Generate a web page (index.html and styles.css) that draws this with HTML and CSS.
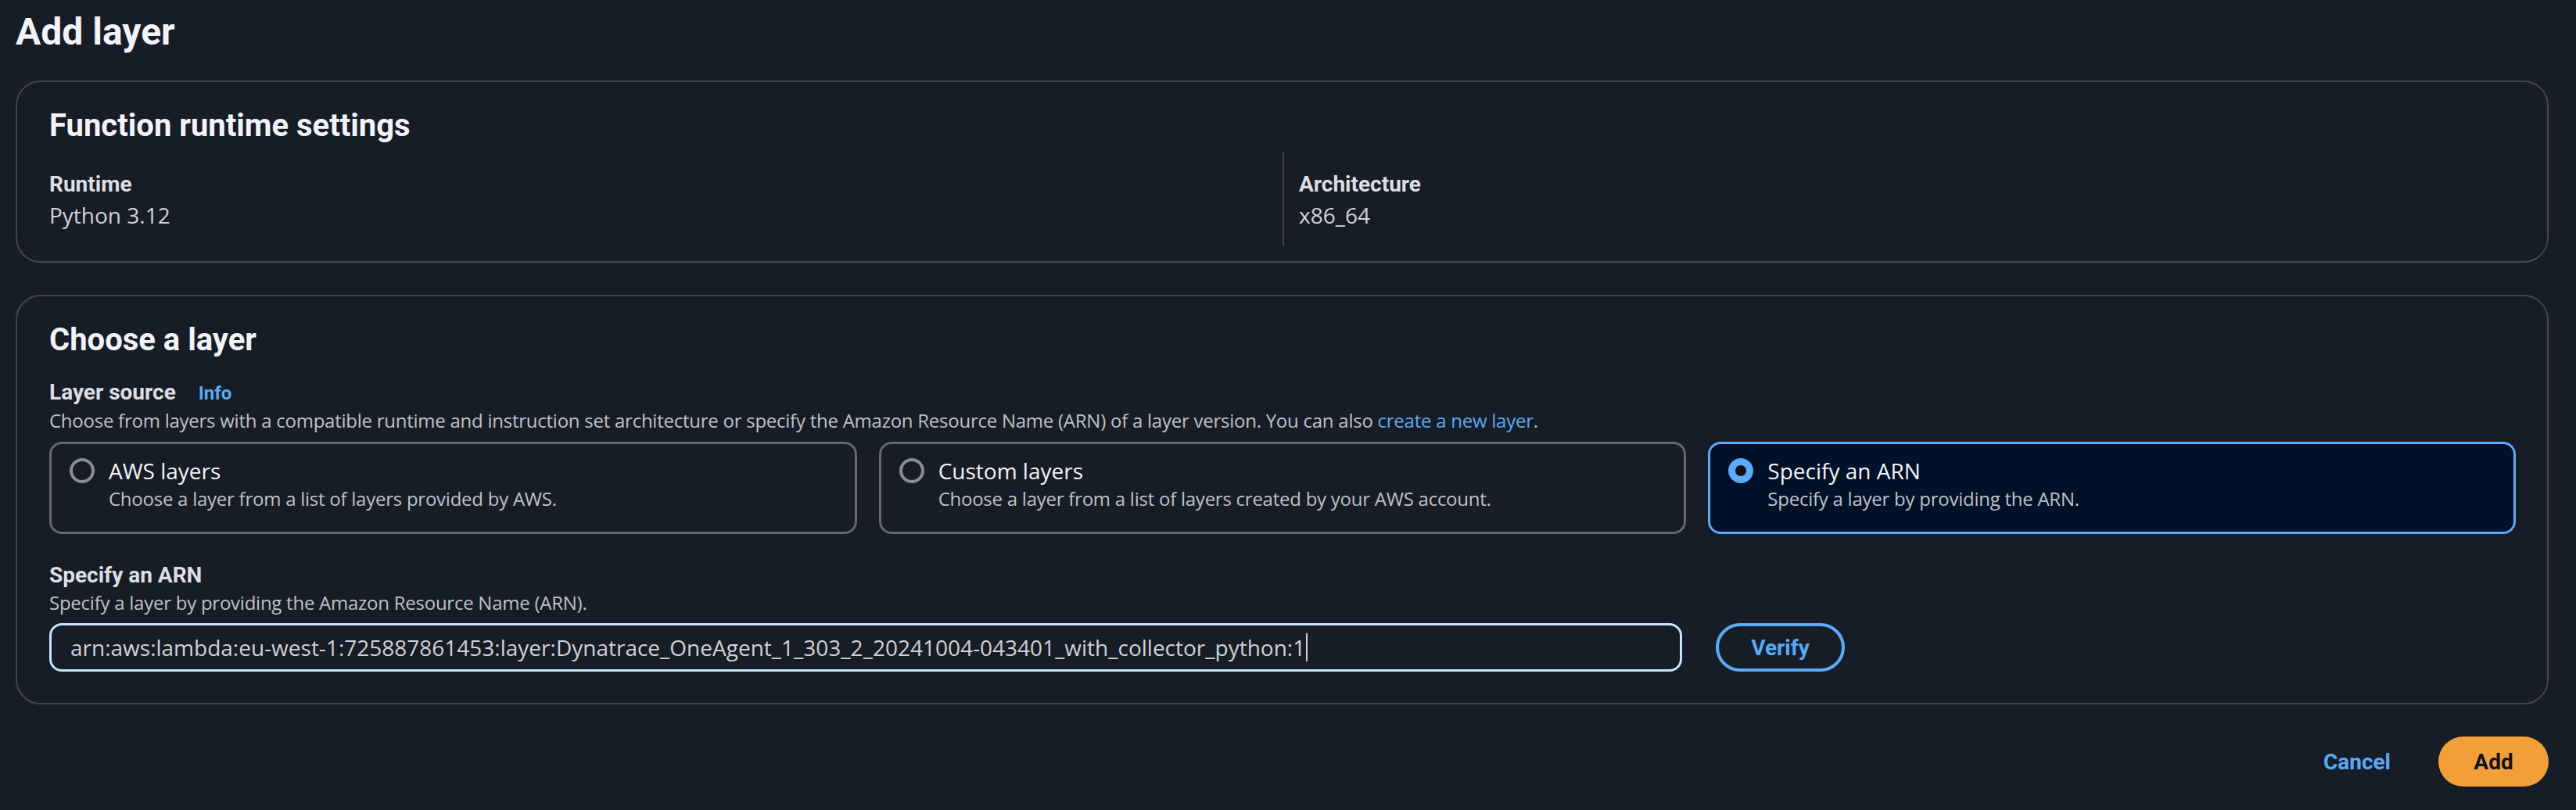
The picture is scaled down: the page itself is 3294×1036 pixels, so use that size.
FILE: index.html
```html
<!DOCTYPE html>
<html lang="en">
<head>
<meta charset="utf-8">
<title>Add layer</title>
<link rel="stylesheet" href="styles.css">
</head>
<body>
<div class="page">
  <h1 class="page-title">Add layer</h1>

  <section class="card">
    <h2 class="card-title">Function runtime settings</h2>
    <div class="kv-grid">
      <div class="kv-col">
        <div class="label">Runtime</div>
        <div class="value">Python 3.12</div>
      </div>
      <div class="kv-col kv-divided">
        <div class="label">Architecture</div>
        <div class="value">x86_64</div>
      </div>
    </div>
  </section>

  <section class="card card-layer">
    <h2 class="card-title">Choose a layer</h2>
    <div class="field">
      <div class="label">Layer source <a class="info-link">Info</a></div>
      <div class="desc">Choose from layers with a compatible runtime and instruction set architecture or specify the Amazon Resource Name (ARN) of a layer version. You can also <a class="link">create a new layer</a>.</div>
      <div class="tiles">
        <div class="tile">
          <span class="radio"></span>
          <div class="tile-text">
            <div class="tile-title">AWS layers</div>
            <div class="tile-desc">Choose a layer from a list of layers provided by AWS.</div>
          </div>
        </div>
        <div class="tile">
          <span class="radio"></span>
          <div class="tile-text">
            <div class="tile-title">Custom layers</div>
            <div class="tile-desc">Choose a layer from a list of layers created by your AWS account.</div>
          </div>
        </div>
        <div class="tile tile-selected">
          <span class="radio radio-checked"></span>
          <div class="tile-text">
            <div class="tile-title">Specify an ARN</div>
            <div class="tile-desc">Specify a layer by providing the ARN.</div>
          </div>
        </div>
      </div>
    </div>

    <div class="field field-arn">
      <div class="label">Specify an ARN</div>
      <div class="desc">Specify a layer by providing the Amazon Resource Name (ARN).</div>
      <div class="arn-row">
        <div class="input"><span class="input-text">arn:aws:lambda:eu-west-1:725887861453:layer:Dynatrace_OneAgent_1_303_2_20241004-043401_with_collector_python:1</span><span class="caret"></span></div>
        <button class="btn btn-normal">Verify</button>
      </div>
    </div>
  </section>

  <div class="actions">
    <button class="btn btn-link">Cancel</button>
    <button class="btn btn-primary">Add</button>
  </div>
</div>
</body>
</html>
```

FILE: styles.css
```css
* { box-sizing: border-box; }
html, body { margin: 0; padding: 0; }
body {
  background: #161d26;
  color: #dedee3;
  font-family: "Open Sans", "Noto Sans", sans-serif;
  width: 3294px;
  height: 1036px;
  overflow: hidden;
}
.page {
  padding: 9px 35px 0 20px;
}
.page-title {
  margin: 0;
  font-family: Roboto, "Open Sans", sans-serif;
  font-size: 48px;
  line-height: 64px;
  font-weight: 700;
  color: #f3f3f7;
}
.card {
  margin-top: 30px;
  border: 2px solid #424650;
  border-radius: 32px;
  padding: 28px 40px 19px 41px;
}
.card-layer { margin-top: 41px; padding-bottom: 40px; }
.card-title {
  margin: 0;
  font-family: Roboto, "Open Sans", sans-serif;
  font-size: 40px;
  line-height: 56px;
  font-weight: 700;
  color: #f3f3f7;
}
.kv-grid {
  margin-top: 6px;
  display: grid;
  grid-template-columns: 1fr 1fr;
}
.kv-col { padding: 20px 0; }
.kv-divided {
  border-left: 2px solid #424650;
  padding-left: 19px;
}
.label {
  font-family: Roboto, "Open Sans", sans-serif;
  font-size: 28px;
  line-height: 42px;
  margin-bottom: -2px;
  font-weight: 700;
  color: #dedee3;
}
.value {
  font-size: 28px;
  line-height: 40px;
  color: #d1d1d6;
}
.field { margin-top: 18px; }
.field-arn { margin-top: 32px; }
.info-link {
  margin-left: 22px;
  font-size: 24px;
  font-weight: 700;
  color: #5aaaf5;
}
.desc {
  font-size: 24px;
  line-height: 32px;
  letter-spacing: -0.25px;
  color: #c0c0c8;
}
.link { color: #5aaaf5; }
.tiles {
  margin-top: 11px;
  display: grid;
  grid-template-columns: 1fr 1fr 1fr;
  gap: 28px;
}
.tile {
  display: flex;
  align-items: flex-start;
  gap: 18px;
  height: 118px;
  border: 3px solid #656871;
  border-radius: 16px;
  padding: 14px 20px 20px 23px;
}
.tile-selected {
  border-color: #5aaaf5;
  background: #001129;
}
.radio {
  flex: 0 0 32px;
  width: 32px;
  height: 32px;
  margin-top: 4px;
  border: 4px solid #8c8c94;
  border-radius: 50%;
}
.radio-checked {
  border: 9px solid #5aaaf5;
  background: #0f141a;
}
.tile-title {
  font-size: 28px;
  line-height: 40px;
  color: #f3f3f7;
}
.tile-desc {
  font-size: 24px;
  line-height: 32px;
  letter-spacing: -0.25px;
  color: #c0c0c8;
}
.arn-row {
  margin-top: 10px;
  display: flex;
  align-items: center;
  gap: 43px;
}
.input {
  flex: 0 0 2088px;
  height: 62px;
  border: 3px solid #c6e4fb;
  border-radius: 16px;
  padding: 0 24px;
  display: flex;
  align-items: center;
  font-size: 28px;
  color: #d1d1d6;
  white-space: nowrap;
  overflow: hidden;
}
.caret {
  display: inline-block;
  width: 2px;
  height: 36px;
  margin-left: 1px;
  background: #d1d1d6;
}
.btn {
  font-family: Roboto, "Open Sans", sans-serif;
  font-weight: 700;
  font-size: 28px;
  border-radius: 32px;
  cursor: pointer;
}
.btn-normal {
  height: 62px;
  width: 165px;
  background: transparent;
  border: 4px solid #5aaaf5;
  color: #5aaaf5;
}
.actions {
  margin-top: 41px;
  display: flex;
  justify-content: flex-end;
  gap: 17px;
}
.btn-link {
  height: 64px;
  padding: 0 44px;
  background: transparent;
  border: none;
  color: #5aaaf5;
}
.btn-primary {
  height: 64px;
  width: 141px;
  background: #f29f3a;
  border: none;
  color: #0f141a;
}
```
